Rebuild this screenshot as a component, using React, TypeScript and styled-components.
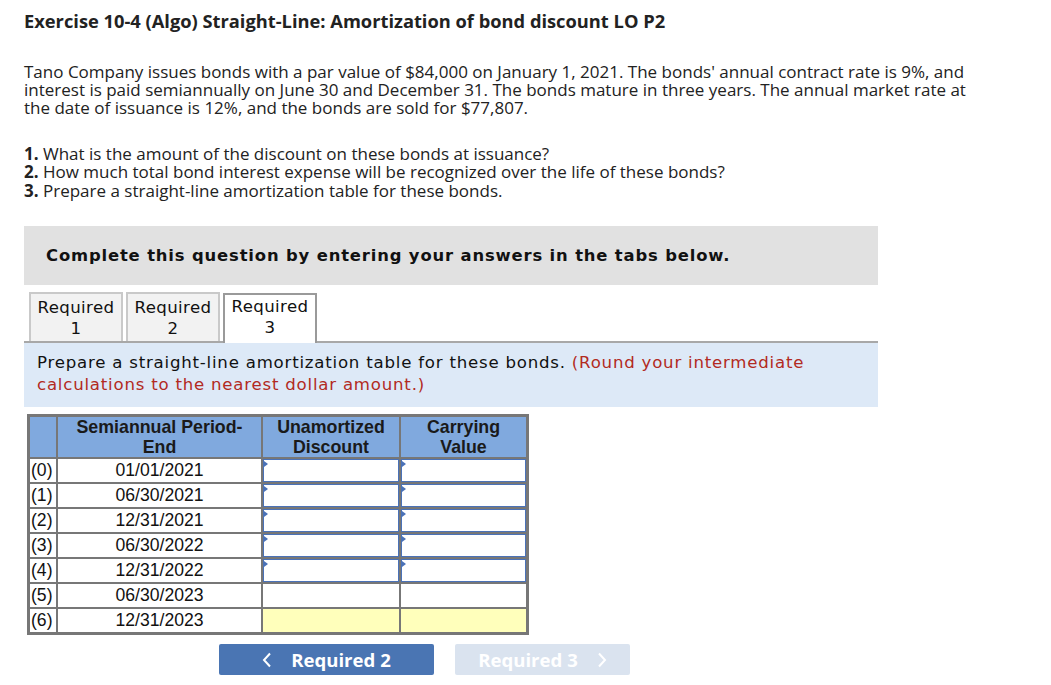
import React from 'react';
import styled, { createGlobalStyle } from 'styled-components';

const GlobalStyle = createGlobalStyle`
  html, body {
    margin: 0;
    padding: 0;
    background: #ffffff;
  }
  body {
    font-family: 'Open Sans', 'Liberation Sans', Arial, sans-serif;
    color: #222222;
  }
`;

const Page = styled.div`
  width: 1051px;
  padding: 9px 0 0 24px;
  box-sizing: border-box;
`;

const Title = styled.h1`
  margin: 0;
  font-family: 'Open Sans', 'Liberation Sans', Arial, sans-serif;
  font-size: 18.3px;
  font-weight: 700;
  line-height: 23px;
  color: #222222;
`;

const Intro = styled.p`
  margin: 31px 0 0 0;
  white-space: nowrap;
  font-size: 17px;
  line-height: 18.2px;
`;

const Questions = styled.ol`
  list-style: none;
  margin: 27px 0 0 0;
  padding: 0;
  font-size: 17px;
  line-height: 18.5px;

  b {
    font-weight: 700;
  }
`;

const Banner = styled.div`
  margin-top: 26px;
  width: 854px;
  height: 59px;
  background: #e1e1e1;
  display: flex;
  align-items: center;
  padding-left: 22px;
  box-sizing: border-box;
  font-family: 'DejaVu Sans', Verdana, sans-serif;
  font-size: 16.4px;
  font-weight: 700;
  letter-spacing: 0.85px;
  color: #111111;
`;

const TabRow = styled.div`
  margin-top: 7px;
  width: 854px;
  display: flex;
  align-items: flex-end;
  gap: 3px;
  padding-left: 5px;
  box-sizing: border-box;
  border-bottom: 2px solid #a8a8a8;
`;

const Tab = styled.div<{ $active?: boolean }>`
  width: 94px;
  height: ${(p) => (p.$active ? 50 : 49)}px;
  box-sizing: border-box;
  border: 2px solid ${(p) => (p.$active ? '#9a9a9a' : '#c9c9c9')};
  border-bottom: none;
  background: ${(p) => (p.$active ? '#ffffff' : '#f2f2f2')};
  margin-bottom: ${(p) => (p.$active ? -2 : 0)}px;
  display: flex;
  flex-direction: column;
  align-items: center;
  justify-content: ${(p) => (p.$active ? 'flex-start' : 'center')};
  padding-top: ${(p) => (p.$active ? 1 : 0)}px;
  font-family: 'DejaVu Sans', Verdana, sans-serif;
  font-size: 16.6px;
  letter-spacing: 0.4px;
  line-height: 21px;
  color: #111111;
`;

const Instruction = styled.div`
  width: 854px;
  height: 64px;
  box-sizing: border-box;
  background: #dde9f7;
  padding: 9px 0 0 13px;
  font-family: 'DejaVu Sans', Verdana, sans-serif;
  font-size: 16.6px;
  letter-spacing: 0.78px;
  line-height: 22px;
  color: #111111;

  span {
    color: #b22a22;
  }
`;

const Table = styled.table`
  margin: 7px 0 0 3px;
  border-collapse: collapse;
  border: 3px solid #777777;
  font-family: 'Liberation Sans', Arial, sans-serif;
  font-size: 17.6px;
  color: #111111;
`;

const HeadCell = styled.th<{ $w: number }>`
  width: ${(p) => p.$w}px;
  height: 39px;
  padding: 0;
  background: #80a9de;
  border: 2px solid #777777;
  font-size: 17.8px;
  font-weight: 700;
  line-height: 20px;
  color: #1a1a1a;
  text-align: center;
  vertical-align: middle;
`;

const Cell = styled.td<{ $yellow?: boolean }>`
  height: 23px;
  padding: 0;
  border: 2px solid #777777;
  background: ${(p) => (p.$yellow ? '#ffffbb' : '#ffffff')};
  text-align: center;
  line-height: 23px;
`;

const IndexCell = styled(Cell)`
  text-align: left;
  padding-left: 1px;
`;

const InputCell = styled.td`
  height: 23px;
  padding: 0;
  border: 2px solid #777777;
  background: #ffffff;
`;

const InputBox = styled.div`
  position: relative;
  height: 23px;
  border: 1px solid #4a72b8;
  box-sizing: border-box;
  background: #ffffff;

  &::before {
    content: '';
    position: absolute;
    top: 1px;
    left: 0;
    border-top: 3px solid transparent;
    border-bottom: 3px solid transparent;
    border-left: 4px solid #4a72b8;
  }
`;

const NavRow = styled.div`
  margin: 9px 0 0 195px;
  display: flex;
  gap: 21px;
`;

const NavButton = styled.button<{ $disabled?: boolean }>`
  height: 31px;
  width: ${(p) => (p.$disabled ? 175 : 215)}px;
  border: none;
  border-radius: 2px;
  background: ${(p) => (p.$disabled ? '#dae3ef' : '#4a75b3')};
  color: #ffffff;
  display: flex;
  align-items: center;
  justify-content: center;
  gap: 19px;
  font-family: 'Open Sans', 'Liberation Sans', Arial, sans-serif;
  font-size: 18.6px;
  font-weight: 700;
  padding: 0;
  cursor: ${(p) => (p.$disabled ? 'default' : 'pointer')};
`;

const Chevron = ({ dir }: { dir: 'left' | 'right' }) => (
  <svg width="10" height="16" viewBox="0 0 10 16" aria-hidden>
    <path
      d={dir === 'left' ? 'M8 1.5 L2 8 L8 14.5' : 'M2 1.5 L8 8 L2 14.5'}
      fill="none"
      stroke="#ffffff"
      strokeWidth="2"
    />
  </svg>
);

const rows = [
  { idx: '(0)', date: '01/01/2021', kind: 'input' },
  { idx: '(1)', date: '06/30/2021', kind: 'input' },
  { idx: '(2)', date: '12/31/2021', kind: 'input' },
  { idx: '(3)', date: '06/30/2022', kind: 'input' },
  { idx: '(4)', date: '12/31/2022', kind: 'input' },
  { idx: '(5)', date: '06/30/2023', kind: 'blank' },
  { idx: '(6)', date: '12/31/2023', kind: 'yellow' },
];

export default function App() {
  return (
    <>
      <GlobalStyle />
      <Page>
        <Title>Exercise 10-4 (Algo) Straight-Line: Amortization of bond discount LO P2</Title>
        <Intro>
          Tano Company issues bonds with a par value of $84,000 on January 1, 2021. The bonds' annual
          contract rate is 9%, and
          <br />
          interest is paid semiannually on June 30 and December 31. The bonds mature in three years. The
          annual market rate at
          <br />
          the date of issuance is 12%, and the bonds are sold for $77,807.
        </Intro>
        <Questions>
          <li>
            <b>1.</b> What is the amount of the discount on these bonds at issuance?
          </li>
          <li>
            <b>2.</b> How much total bond interest expense will be recognized over the life of these bonds?
          </li>
          <li>
            <b>3.</b> Prepare a straight-line amortization table for these bonds.
          </li>
        </Questions>

        <Banner>Complete this question by entering your answers in the tabs below.</Banner>

        <TabRow>
          <Tab>
            <div>Required</div>
            <div>1</div>
          </Tab>
          <Tab>
            <div>Required</div>
            <div>2</div>
          </Tab>
          <Tab $active>
            <div>Required</div>
            <div>3</div>
          </Tab>
        </TabRow>

        <Instruction>
          Prepare a straight-line amortization table for these bonds.{' '}
          <span>(Round your intermediate calculations to the nearest dollar amount.)</span>
        </Instruction>

        <Table>
          <thead>
            <tr>
              <HeadCell $w={26} />
              <HeadCell $w={203}>
                Semiannual Period-
                <br />
                End
              </HeadCell>
              <HeadCell $w={136}>
                Unamortized
                <br />
                Discount
              </HeadCell>
              <HeadCell $w={125}>
                Carrying
                <br />
                Value
              </HeadCell>
            </tr>
          </thead>
          <tbody>
            {rows.map((r) => (
              <tr key={r.idx}>
                <IndexCell>{r.idx}</IndexCell>
                <Cell>{r.date}</Cell>
                {r.kind === 'input' ? (
                  <>
                    <InputCell>
                      <InputBox />
                    </InputCell>
                    <InputCell>
                      <InputBox />
                    </InputCell>
                  </>
                ) : (
                  <>
                    <Cell $yellow={r.kind === 'yellow'} />
                    <Cell $yellow={r.kind === 'yellow'} />
                  </>
                )}
              </tr>
            ))}
          </tbody>
        </Table>

        <NavRow>
          <NavButton>
            <Chevron dir="left" />
            Required 2
          </NavButton>
          <NavButton $disabled disabled>
            Required 3
            <Chevron dir="right" />
          </NavButton>
        </NavRow>
      </Page>
    </>
  );
}
